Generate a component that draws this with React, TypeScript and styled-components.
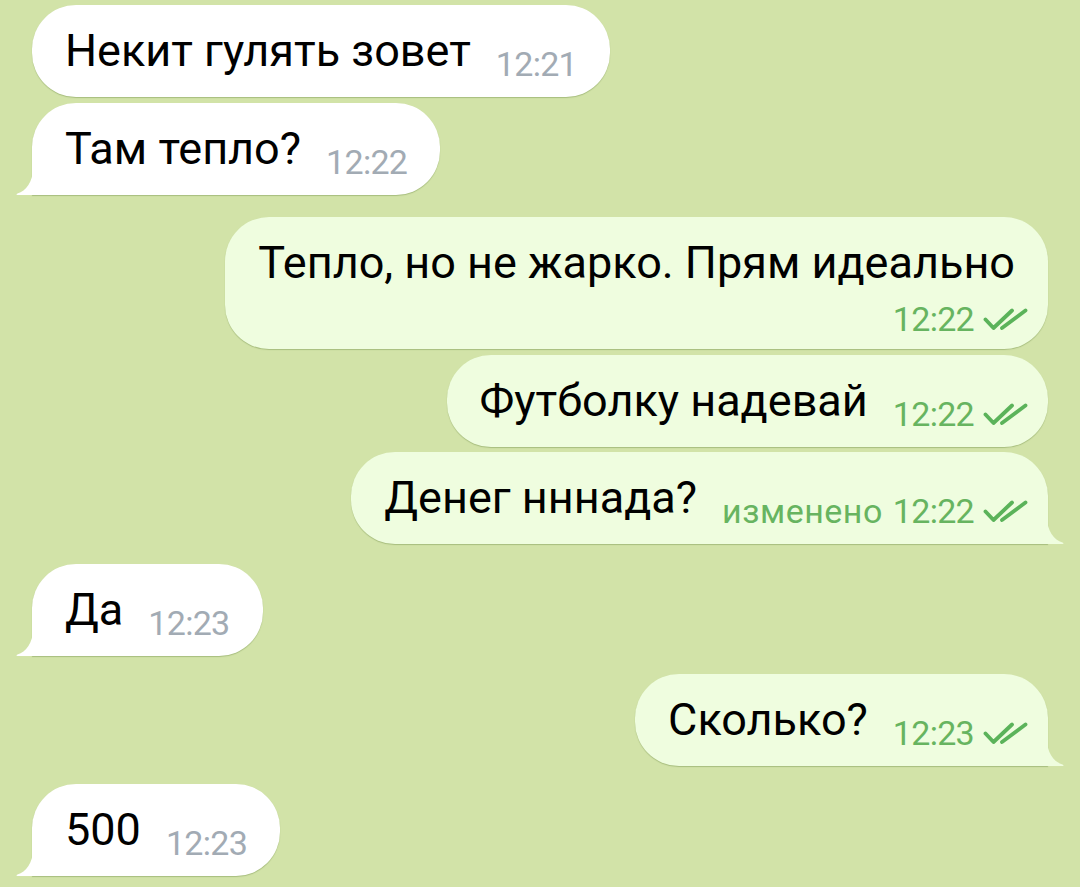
import React from 'react'
import styled, { createGlobalStyle } from 'styled-components'

const Global = createGlobalStyle`
  html, body {
    margin: 0;
    padding: 0;
    background: #d2e3a8;
  }
  body {
    font-family: Roboto, "Noto Sans", sans-serif;
  }
`

type Msg = {
  text: string
  time: string
  out?: boolean
  tail?: boolean
  gap: number
  edited?: boolean
  wrap?: boolean
}

const messages: Msg[] = [
  { text: 'Некит гулять зовет', time: '12:21', gap: 5 },
  { text: 'Там тепло?', time: '12:22', tail: true, gap: 6 },
  { text: 'Тепло, но не жарко. Прям идеально', time: '12:22', out: true, gap: 22, wrap: true },
  { text: 'Футболку надевай', time: '12:22', out: true, gap: 6 },
  { text: 'Денег нннада?', time: '12:22', out: true, tail: true, gap: 5, edited: true },
  { text: 'Да', time: '12:23', tail: true, gap: 20 },
  { text: 'Сколько?', time: '12:23', out: true, tail: true, gap: 18 },
  { text: '500', time: '12:23', tail: true, gap: 18 },
]

const Chat = styled.div`
  display: flex;
  flex-direction: column;
  padding: 0 32px;
  height: 887px;
  overflow: hidden;
`

const Bubble = styled.div<{ $out?: boolean; $tail?: boolean; $gap: number; $wrap?: boolean }>`
  position: relative;
  align-self: ${(p) => (p.$out ? 'flex-end' : 'flex-start')};
  margin-top: ${(p) => p.$gap}px;
  background: ${(p) => (p.$out ? '#effddf' : '#ffffff')};
  border-radius: 44px;
  ${(p) => p.$tail && (p.$out ? 'border-bottom-right-radius: 0;' : 'border-bottom-left-radius: 0;')}
  box-shadow: 0 1px 1px rgba(90, 120, 50, 0.35);
  padding: 20px 33px ${(p) => (p.$wrap ? 18 : 20)}px 33px;
  max-width: 830px;
  box-sizing: border-box;
`

const Text = styled.span`
  font-size: 45px;
  line-height: 52px;
  color: #000;
`

const Meta = styled.span<{ $out?: boolean; $block?: boolean }>`
  display: ${(p) => (p.$block ? 'flex' : 'inline-flex')};
  justify-content: flex-end;
  align-items: center;
  gap: 9px;
  margin-left: ${(p) => (p.$block ? 0 : 25)}px;
  margin-right: ${(p) => (p.$out ? -13 : 0)}px;
  margin-top: ${(p) => (p.$block ? 18 : 0)}px;
  vertical-align: ${(p) => (p.$block ? 'baseline' : '-10px')};
  font-size: 34px;
  line-height: 24px;
  letter-spacing: -0.7px;
  color: ${(p) => (p.$out ? '#67b460' : '#a2abb4')};
`

const Edited = styled.span`
  letter-spacing: 0.5px;
  margin-right: 10px;
`

const Tail = styled.svg<{ $out?: boolean }>`
  position: absolute;
  bottom: 0;
  ${(p) => (p.$out ? 'right: -16px;' : 'left: -16px;')}
  width: 17px;
  height: 27px;
  ${(p) => p.$out && 'transform: scaleX(-1);'}
`

function Checks() {
  return (
    <svg width="45" height="23" viewBox="0 0 45 23" fill="none">
      <path d="M2.5 11.5 L10.5 20 L29 2.5" stroke="#5bb35a" strokeWidth="3.8" strokeLinecap="round" strokeLinejoin="round" />
      <path d="M19 20 L42.5 2.5" stroke="#5bb35a" strokeWidth="3.8" strokeLinecap="round" strokeLinejoin="round" />
    </svg>
  )
}

function TailShape({ out }: { out?: boolean }) {
  return (
    <Tail $out={out} viewBox="0 0 17 27">
      <path d="M17 0 C17 14 10 23 1.5 25.5 C0 26 0.3 27 1.5 27 L17 27 Z" fill={out ? '#effddf' : '#ffffff'} />
    </Tail>
  )
}

export default function App() {
  return (
    <>
      <Global />
      <Chat>
        {messages.map((m, i) => (
          <Bubble key={i} $out={m.out} $tail={m.tail} $gap={m.gap} $wrap={m.wrap}>
            <Text>{m.text}</Text>
            <Meta $out={m.out} $block={m.wrap}>
              <span>
                {m.edited && <Edited>изменено</Edited>}
                {m.time}
              </span>
              {m.out && <Checks />}
            </Meta>
            {m.tail && <TailShape out={m.out} />}
          </Bubble>
        ))}
      </Chat>
    </>
  )
}
